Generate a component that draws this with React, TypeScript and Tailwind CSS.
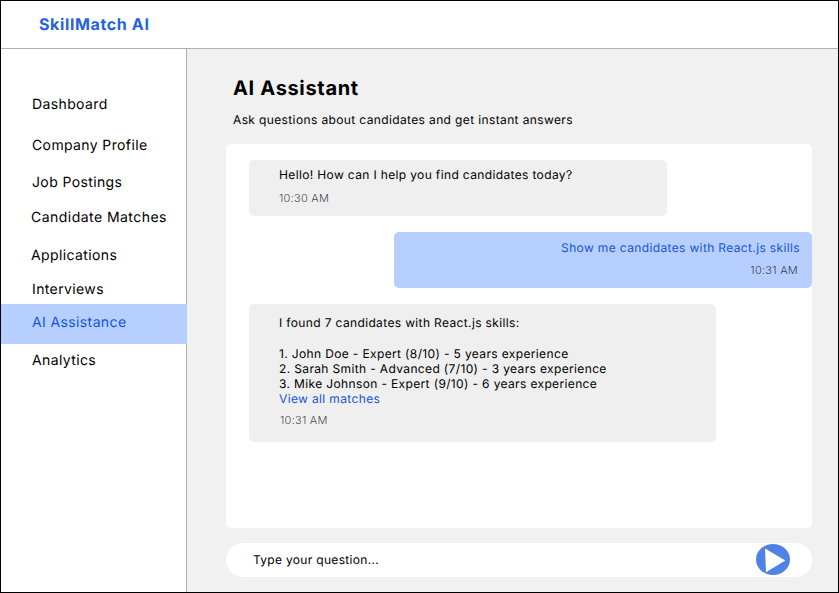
const navItems = [
  { label: "Dashboard", className: "mt-[46px] pl-[31px]" },
  { label: "Company Profile", className: "mt-[21px] pl-[31px]" },
  { label: "Job Postings", className: "mt-[17px] pl-[31px]" },
  { label: "Candidate Matches", className: "mt-[15px] pl-[30px] tracking-[0.033em]" },
  { label: "Applications", className: "mt-[18px] pl-[30px]" },
  { label: "Interviews", className: "mt-[14px] pl-[31px]" },
  { label: "AI Assistance", className: "mt-[4px] h-10 w-[186px] bg-[#b7cfff] pt-[9px] pl-[31px] text-[#1456d9]" },
  { label: "Analytics", className: "mt-[7px] pl-[31px]" },
];

const matches = [
  "1. John Doe - Expert (8/10) - 5 years experience",
  "2. Sarah Smith - Advanced (7/10) - 3 years experience",
  "3. Mike Johnson - Expert (9/10) - 6 years experience",
];

function Time({ value, className }: { value: string; className: string }) {
  return (
    <p className={`text-[11px] leading-[14px] font-light tracking-[0.023em] text-black/75 ${className}`}>{value}</p>
  );
}

function Sidebar() {
  return (
    <aside className="w-[186px] shrink-0 border-r border-[#b0b0b0] bg-white">
      <nav className="flex flex-col text-[14px] leading-5 tracking-[0.027em] whitespace-nowrap">
        {navItems.map((item) => (
          <a key={item.label} className={item.className}>
            {item.label}
          </a>
        ))}
      </nav>
    </aside>
  );
}

export default function App() {
  return (
    <div className="flex h-[593px] w-[839px] flex-col overflow-hidden border border-black bg-white font-['Inter',sans-serif] text-black [text-rendering:geometricPrecision]">
      <header className="h-12 shrink-0 border-b border-[#b0b0b0] pt-[13px] pl-[38px]">
        <div className="text-[16px] leading-5 font-bold tracking-[0.04em] text-[#2463dc]">SkillMatch AI</div>
      </header>
      <div className="flex min-h-0 flex-1">
        <Sidebar />
        <main className="flex flex-1 flex-col bg-[#f1f1f1] pl-[39px]">
          <h1 className="mt-[27px] ml-[7px] text-[20px] leading-6 font-bold tracking-[0.033em]">AI Assistant</h1>
          <p className="mt-3 ml-[7px] text-[12px] leading-4 tracking-[0.031em]">
            Ask questions about candidates and get instant answers
          </p>
          <section className="mt-4 flex h-[384px] w-[586px] flex-col rounded-[5px] bg-white pt-4 text-[12px] leading-[15px] tracking-[0.03em]">
            <div className="ml-[23px] h-14 w-[418px] rounded-[5px] bg-[#efefef] pt-[7px] pl-[30px]">
              <p>Hello! How can I help you find candidates today?</p>
              <Time value="10:30 AM" className="mt-[9px]" />
            </div>
            <div className="mt-4 h-14 w-[418px] self-end rounded-[5px] bg-[#b7cfff] pt-2 text-right">
              <p className="pr-[12px] text-[#1456d9]">Show me candidates with React.js skills</p>
              <Time value="10:31 AM" className="mt-2 pr-[14px]" />
            </div>
            <div className="mt-4 ml-[23px] h-[138px] w-[467px] rounded-[5px] bg-[#efefef] pt-[11px] pl-[30px]">
              <p>I found 7 candidates with React.js skills:</p>
              <ul className="mt-4">
                {matches.map((match) => (
                  <li key={match}>{match}</li>
                ))}
              </ul>
              <a className="block text-[#1456d9]">View all matches</a>
              <Time value="10:31 AM" className="mt-[7px] pl-px" />
            </div>
          </section>
          <div className="mt-[15px] flex h-[34px] w-[586px] items-center justify-between rounded-full bg-white pr-[22px] pl-[27px]">
            <span className="text-[12px] leading-4 tracking-[0.026em]">Type your question...</span>
            <button aria-label="Send" className="-mt-px h-[31px] w-[34px]">
              <svg width="34" height="31" viewBox="0 0 34 31">
                <ellipse cx="17" cy="15.5" rx="17" ry="15.5" fill="#4f82e6" />
                <path d="M9 4.5 L29.3 16.5 L10 28.3 Z" fill="#fff" />
              </svg>
            </button>
          </div>
        </main>
      </div>
    </div>
  );
}
